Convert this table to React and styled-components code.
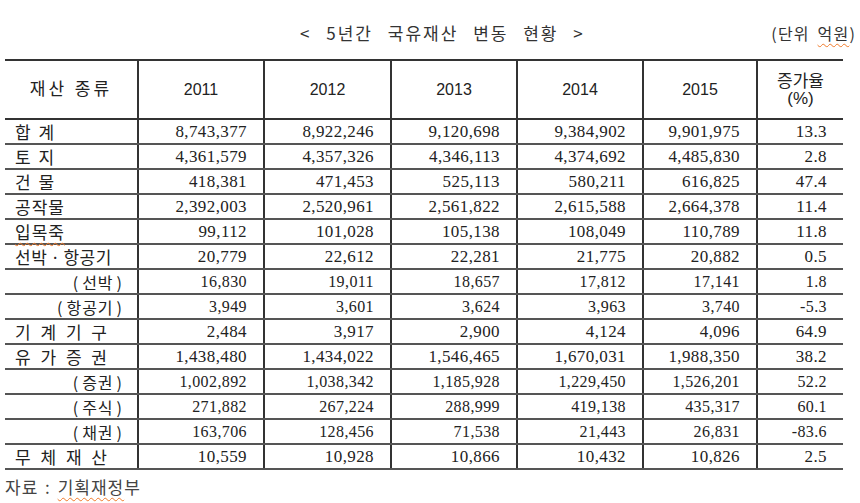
import React from "react";
import styled, { createGlobalStyle } from "styled-components";

const Global = createGlobalStyle`
  html, body { margin: 0; padding: 0; background: #fff; }
  body { font-family: "Noto Sans CJK KR", "Liberation Sans", sans-serif; color: #222; }
`;

const Page = styled.div`
  width: 860px;
  height: 503px;
  display: flex;
  flex-direction: column;
  background: #fff;
`;

const TitleBar = styled.div`
  height: 59px;
  box-sizing: border-box;
  padding-top: 6px;
  display: flex;
  align-items: center;
  justify-content: space-between;
`;

const Title = styled.div`
  margin-left: 300px;
  font-family: "Noto Sans CJK KR", sans-serif;
  font-size: 17px;
  letter-spacing: 2px;
  word-spacing: 9px;
  color: #333;
`;

const Unit = styled.div`
  padding-right: 4px;
  font-family: "Noto Sans CJK KR", sans-serif;
  font-size: 16px;
  letter-spacing: 1.2px;
  word-spacing: 3px;
  color: #333;
`;

const Squiggle = styled.span`
  text-decoration: underline wavy #f07a2a;
  text-decoration-thickness: 1px;
  text-underline-offset: 3px;
  text-decoration-skip-ink: none;
`;

const Table = styled.table`
  margin-left: 5px;
  width: 838px;
  border-collapse: collapse;
  table-layout: fixed;
  border-top: 2px solid #333;
  border-bottom: 2px solid #555;
`;

const HeadCell = styled.th`
  height: 57px;
  padding: 0;
  font-family: "Liberation Sans", "Noto Sans CJK KR", sans-serif;
  font-weight: 400;
  font-size: ${(p) => p.$size || "16px"};
  letter-spacing: ${(p) => p.$ls || "0"};
  line-height: 18px;
  color: #222;
  text-align: center;
  border-left: 2px solid #333;
  border-bottom: 2px solid #333;
  &:first-child { border-left: none; }
`;

const HeadLine = styled.span`
  display: block;
  line-height: ${(p) => p.$lh || "16px"};
`;

const Row = styled.tr`
  height: 25px;
`;

const LabelCell = styled.td`
  padding: 0 ${(p) => (p.$sub ? "14px" : "0")} 0 ${(p) => (p.$sub ? "0" : "10px")};
  text-align: ${(p) => (p.$sub ? "right" : "left")};
  font-family: "Noto Sans CJK KR", sans-serif;
  font-size: ${(p) => (p.$sub ? "16px" : "17px")};
  letter-spacing: ${(p) => p.$ls || "0"};
  line-height: 20px;
  color: #222;
  white-space: nowrap;
  border-bottom: 2px solid #555;
`;

const Paren = styled.span`
  margin: 0 ${(p) => (p.$open ? "3px" : "0")} 0 ${(p) => (p.$open ? "0" : "3px")};
`;

const NumCell = styled.td`
  padding: 0 16px 0 0;
  text-align: right;
  font-family: "Liberation Serif", "DejaVu Serif", serif;
  font-size: ${(p) => (p.$sub ? "16px" : "17px")};
  letter-spacing: ${(p) => p.$ls || "0.4px"};
  line-height: 20px;
  color: #222;
  white-space: nowrap;
  border-left: 2px solid #333;
  border-bottom: 2px solid #555;
`;

const Footer = styled.div`
  padding: 4px 0 0 5px;
  font-family: "Noto Sans CJK KR", sans-serif;
  font-size: 17px;
  letter-spacing: 1px;
  word-spacing: 2px;
  color: #444;
`;

const years = ["2011", "2012", "2013", "2014", "2015"];

const rows = [
  { label: "합 계", ls: "2px", vals: ["8,743,377", "8,922,246", "9,120,698", "9,384,902", "9,901,975", "13.3"] },
  { label: "토 지", ls: "2px", vals: ["4,361,579", "4,357,326", "4,346,113", "4,374,692", "4,485,830", "2.8"] },
  { label: "건 물", ls: "2px", vals: ["418,381", "471,453", "525,113", "580,211", "616,825", "47.4"] },
  { label: "공작물", ls: "1px", vals: ["2,392,003", "2,520,961", "2,561,822", "2,615,588", "2,664,378", "11.4"] },
  { label: "입목죽", ls: "1px", squiggle: true, vals: ["99,112", "101,028", "105,138", "108,049", "110,789", "11.8"] },
  { label: "선박ㆍ항공기", ls: "0.5px", vals: ["20,779", "22,612", "22,281", "21,775", "20,882", "0.5"] },
  { label: "선박", sub: true, ls: "1px", vals: ["16,830", "19,011", "18,657", "17,812", "17,141", "1.8"] },
  { label: "항공기", sub: true, ls: "1px", vals: ["3,949", "3,601", "3,624", "3,963", "3,740", "-5.3"] },
  { label: "기 계 기 구", ls: "3px", vals: ["2,484", "3,917", "2,900", "4,124", "4,096", "64.9"] },
  { label: "유 가 증 권", ls: "3px", vals: ["1,438,480", "1,434,022", "1,546,465", "1,670,031", "1,988,350", "38.2"] },
  { label: "증권", sub: true, ls: "1px", vals: ["1,002,892", "1,038,342", "1,185,928", "1,229,450", "1,526,201", "52.2"] },
  { label: "주식", sub: true, ls: "1px", vals: ["271,882", "267,224", "288,999", "419,138", "435,317", "60.1"] },
  { label: "채권", sub: true, ls: "1px", vals: ["163,706", "128,456", "71,538", "21,443", "26,831", "-83.6"] },
  { label: "무 체 재 산", ls: "3px", vals: ["10,559", "10,928", "10,866", "10,432", "10,826", "2.5"] },
];

const widths = [133, 126, 127, 126, 126, 114, 86];

function Label({ r }) {
  if (r.sub) {
    return (
      <>
        <Paren $open>(</Paren>
        {r.label}
        <Paren>)</Paren>
      </>
    );
  }
  return r.squiggle ? <Squiggle>{r.label}</Squiggle> : r.label;
}

export default function App() {
  return (
    <Page>
      <Global />
      <TitleBar>
        <Title>&lt; 5년간 국유재산 변동 현황 &gt;</Title>
        <Unit>
          (단위 <Squiggle>억원</Squiggle>)
        </Unit>
      </TitleBar>
      <Table>
        <colgroup>
          {widths.map((w, i) => (
            <col key={i} style={{ width: w }} />
          ))}
        </colgroup>
        <thead>
          <tr>
            <HeadCell $ls="3px" $size="17px">재산 종류</HeadCell>
            {years.map((y) => (
              <HeadCell key={y}>{y}</HeadCell>
            ))}
            <HeadCell $size="17px">
              <HeadLine $lh="18px">증가율</HeadLine>
              <HeadLine $lh="15px">(%)</HeadLine>
            </HeadCell>
          </tr>
        </thead>
        <tbody>
          {rows.map((r) => (
            <Row key={r.label}>
              <LabelCell $sub={r.sub} $ls={r.ls}>
                <Label r={r} />
              </LabelCell>
              {r.vals.map((v, i) => (
                <NumCell key={i} $sub={r.sub}>
                  {v}
                </NumCell>
              ))}
            </Row>
          ))}
        </tbody>
      </Table>
      <Footer>
        자료 : <Squiggle>기획재정</Squiggle>부
      </Footer>
    </Page>
  );
}
